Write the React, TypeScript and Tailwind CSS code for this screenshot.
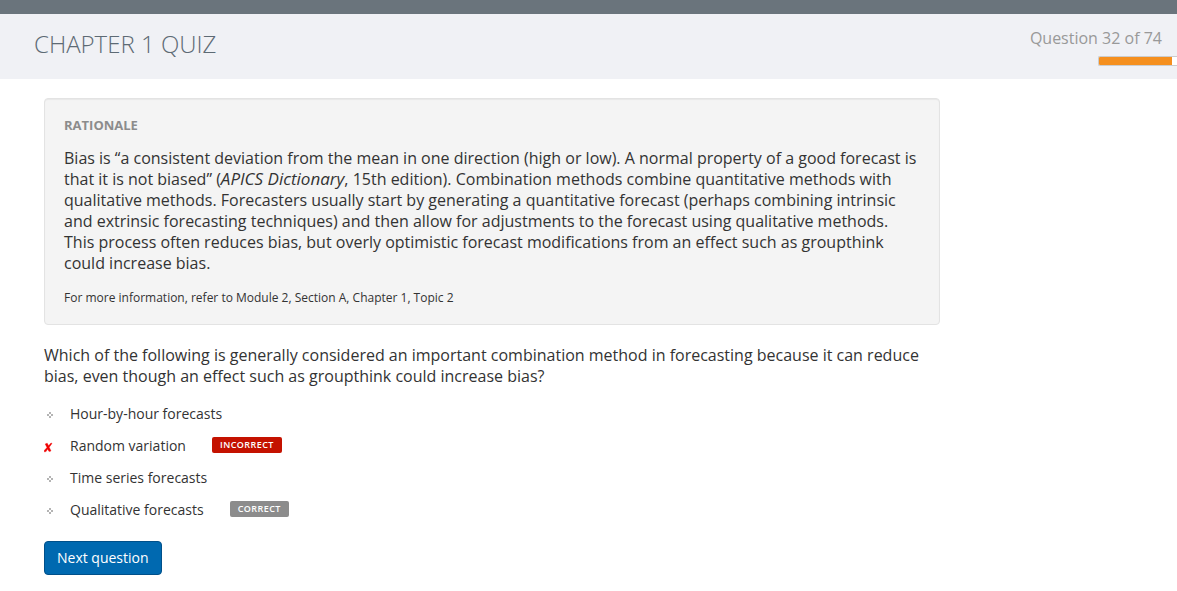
const options = [
  { text: "Hour-by-hour forecasts", tag: "" },
  { text: "Random variation", tag: "Incorrect" },
  { text: "Time series forecasts", tag: "" },
  { text: "Qualitative forecasts", tag: "Correct" },
];

function CrossMark() {
  return (
    <svg width="9" height="11" viewBox="0 0 9 11" className="-ml-[3px] mt-0.5" aria-hidden="true">
      <path
        d="M1.2 2 L3.2 1.2 L4.6 3.8 L7 1 L8 1.4 L5.2 5.2 L7 9 L5 9.4 L3.7 7 L2 9.6 L0.2 9.8 L0.2 8.4 L3 5.6 Z"
        fill="#f00000"
        stroke="#f00000"
        strokeWidth="0.4"
      />
    </svg>
  );
}

function Dots() {
  return (
    <svg width="6" height="6" viewBox="0 0 6 6" className="mt-0.5" aria-hidden="true">
      <path d="M2 0h2v2h-2z M0 2h2v2h-2z M4 2h2v2h-2z M2 4h2v2h-2z" fill="#b4b4b4" />
    </svg>
  );
}

export default function App() {
  return (
    <div className="min-h-screen bg-white font-['Open_Sans',sans-serif] text-[#333]">
      <div className="h-3.5 bg-[#6a747c]" />
      <header className="flex h-[65px] justify-between bg-[#f0f1f5] pl-[34px]">
        <h1 className="pt-3.5 text-2xl font-light leading-8 text-[#5d6a74] uppercase">Chapter 1 Quiz</h1>
        <div className="flex flex-col items-end">
          <p className="pt-3 pr-[15px] text-base leading-6 text-[#999]">Question 32 of 74</p>
          <div className="mt-1.5 h-2.5 w-[79px] overflow-hidden rounded-l-xs border border-r-0 border-[#ccc] bg-white">
            <div className="h-full w-[73px] bg-[#f58f1e]" />
          </div>
        </div>
      </header>
      <main className="max-w-[984px] px-11 pt-[19px]">
        <section className="rounded border border-[#e3e3e3] bg-[#f4f4f4] px-[19px] py-4 shadow-[inset_0_1px_1px_rgba(0,0,0,0.05)]">
          <h2 className="text-[13px] font-bold leading-5 text-[#8c8c8c]">RATIONALE</h2>
          <p className="mt-[13px] text-base leading-[21px]">
            Bias is “a consistent deviation from the mean in one direction (high or low). A normal property of a good
            forecast is that it is not biased” (<em className="text-[17px] leading-4">APICS Dictionary</em>, 15th edition).
            Combination methods combine quantitative methods with qualitative methods. Forecasters usually start by
            generating a quantitative forecast (perhaps combining intrinsic and extrinsic forecasting techniques) and
            then allow for adjustments to the forecast using qualitative methods. This process often reduces bias, but
            overly optimistic forecast modifications from an effect such as groupthink could increase bias.
          </p>
          <p className="mt-3.5 text-xs leading-5">For more information, refer to Module 2, Section A, Chapter 1, Topic 2</p>
        </section>
        <p className="mt-5 text-base leading-[21px]">
          Which of the following is generally considered an important combination method in forecasting because it can
          reduce bias, even though an effect such as groupthink could increase bias?
        </p>
        <ul className="mt-[11px]">
          {options.map((o) => (
            <li key={o.text} className="flex h-8 items-center text-sm">
              <span className="flex w-[26px] pl-[3px]">{o.tag === "Incorrect" ? <CrossMark /> : <Dots />}</span>
              {o.text}
              {o.tag && (
                <span
                  className={`mb-0.5 ml-[26px] rounded-xs px-2 text-[9px] font-semibold leading-4 tracking-wider text-white uppercase ${
                    o.tag === "Incorrect" ? "bg-[#c41200]" : "bg-[#8c8c8c]"
                  }`}
                >
                  {o.tag}
                </span>
              )}
            </li>
          ))}
        </ul>
        <button className="mt-[15px] h-[34px] rounded border border-[#00508a] bg-[#0069b0] px-3 text-sm text-white">
          Next question
        </button>
      </main>
    </div>
  );
}
